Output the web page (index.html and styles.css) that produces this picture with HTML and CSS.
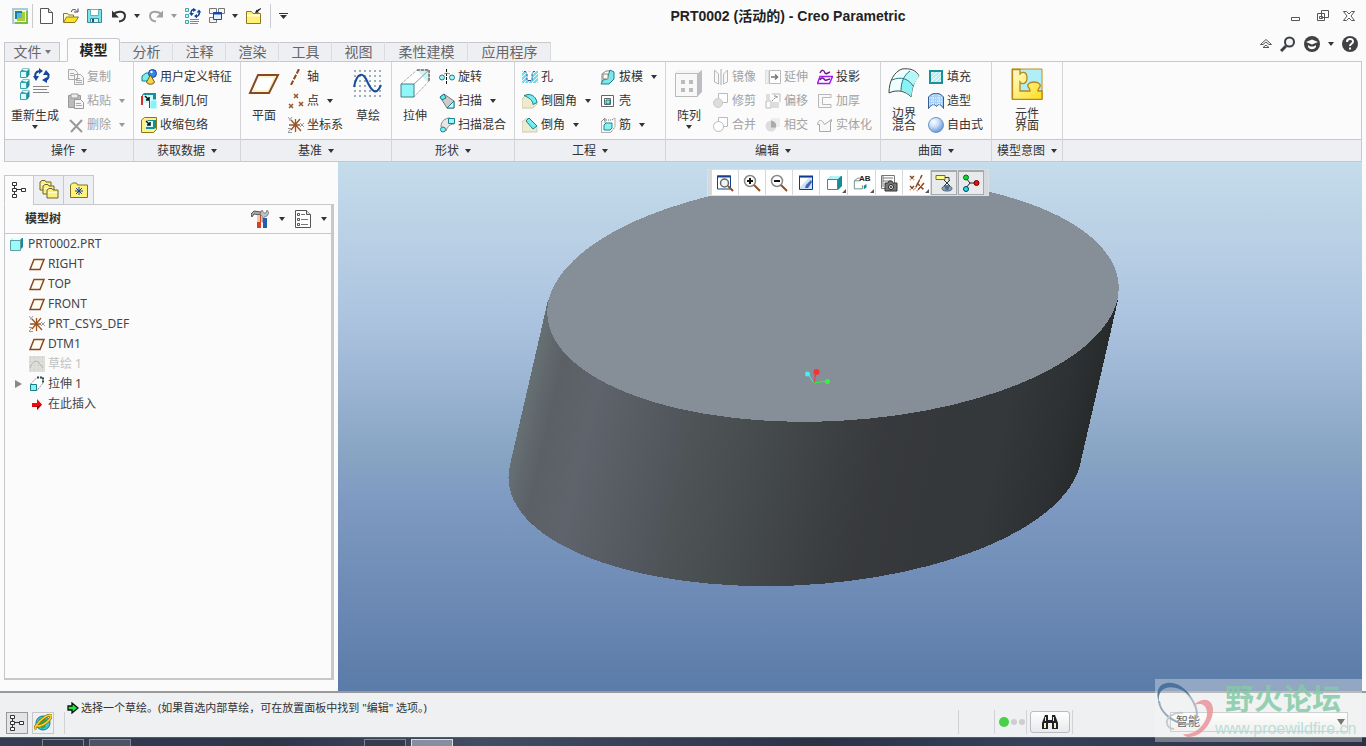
FILE: index.html
```html
<!DOCTYPE html>
<html lang="zh-CN">
<head>
<meta charset="utf-8">
<title>PRT0002 (活动的) - Creo Parametric</title>
<link rel="stylesheet" href="styles.css">
</head>
<body>
<svg class="sprite" aria-hidden="true">
  <defs>
    <linearGradient id="gold" x1="0" y1="0" x2="1" y2="1"><stop offset="0" stop-color="#fffbd0"/><stop offset="1" stop-color="#ffdf1e"/></linearGradient>
    <radialGradient id="ball" cx=".35" cy=".3" r=".75"><stop offset="0" stop-color="#fff"/><stop offset=".45" stop-color="#c5dcf8"/><stop offset="1" stop-color="#5f92d6"/></radialGradient>
    <pattern id="dots" width="4" height="4" patternUnits="userSpaceOnUse"><rect x="1" y="1" width="1" height="1" fill="#8fa6bd"/></pattern>
    <pattern id="hatch" width="4" height="4" patternUnits="userSpaceOnUse"><path d="M0 4L4 0" stroke="#fff"/></pattern>
  </defs>
  <symbol id="app" viewBox="0 0 16 16"><path fill="#a9cbe0" d="M0 0h16v16H0z"/><path fill="#7dbb4a" d="M3 14h11V3h2v13H3z"/><path fill="#eef6d8" d="M2 2h12v12H2z"/><path fill="#1b7fa8" d="M3 3h7v2H5v6H3z"/><path fill="#52b8dc" d="M5 5h5v5H5z"/><path fill="#a8cf3a" d="M10 4h3v9H5v-3h5z"/></symbol>
  <symbol id="new" viewBox="0 0 16 16"><path d="M1.500.5h8l4 4v11h-12z" fill="#fff" stroke="#555"/><path d="M9.500.5v4h4" fill="#ddd" stroke="#555"/></symbol>
  <symbol id="open" viewBox="0 0 16 16"><path d="M.5 14V5.500h4l1 1.500h5v2" fill="#fffbd0" stroke="#8b7a20"/><path d="M.5 14.500l3-5.500h12l-3.500 5.500z" fill="#ffe21f" stroke="#8b7a20"/><path d="M8.500 4c0-3 3-3 5-1.500M15 .5v3.500h-4" fill="none" stroke="#444"/></symbol>
  <symbol id="save" viewBox="0 0 16 16"><path d="M.5 1.500h14v13h-14z" fill="#7fe3ea" stroke="#2b8f9a"/><path d="M3.500 1.500h8v6h-8z" fill="#fff" stroke="#5fb6bf"/><path d="M3.500 10.500h8v4h-8z" fill="#e9eef2" stroke="#3f8c96"/><path d="M5 11h2v3H5z" fill="#2b4f78"/></symbol>
  <symbol id="undo" viewBox="0 0 16 16"><path d="M2 6.500C6 2.500 14 2.500 14 8c0 3-2.500 5-6 5.500" fill="none" stroke="currentColor" stroke-width="2"/><path d="M1 2.500v7h7z" fill="currentColor"/></symbol>
  <symbol id="regen" viewBox="0 0 16 16"><path d="M.5.5h3v3h-3zM.5 6.500h3v3h-3zM.5 12.500h3v3h-3z" fill="#c6fbfc" stroke="#3fa4ad"/><path d="M5 11.500h9M5 13.500h9M5 15.500h8" stroke="#888"/><path d="M6.500 6C5 3 7.500 1 9.500 1.500M14 3.500c1 3-1 5-3 5" fill="none" stroke="#13449c" stroke-width="1.500"/><path d="M8 0l3.500 2L8 4zM12 6v4.500L9 8zM4 5h5L6.500 8zM11.500 4.500h5L14 1.500z" fill="#13449c"/></symbol>
  <symbol id="windows" viewBox="0 0 16 16"><path d="M.5.5h7v5h-7zM9.500.5h6v5h-6zM.5 9.500h7v5h-7z" fill="#f5f5f5" stroke="#777"/><path d="M4.500 4.500h8v7h-8z" fill="#e3f2ff" stroke="#1a47a5"/><path d="M4 5.500h9" stroke="#1a47a5" stroke-width="2"/></symbol>
  <symbol id="close-folder" viewBox="0 0 16 16"><path d="M.5 15.500v-12h5l1.500 2h7.500v10z" fill="#fff176" stroke="#8b7a20"/><path d="M1 7.500h13" stroke="#fffce0" stroke-width="2"/><path d="M15 0c-1 1-3 1-4 2.500l-.5-1L9 5l4-.5-1-1L15 1z" fill="#222"/></symbol>
  <symbol id="regen-big" viewBox="0 0 32 32"><g id="cube-col"><path d="M1.500 3.500l2-3h7v6l-2 3z" fill="#218f98"/><path d="M3 2l1-1h6L8 3z" fill="#dff"/><path d="M1.500 3.500h6v6h-6z" fill="#d6ffff" stroke="#3aa3ac"/></g><use href="#cube-col" y="11"/><use href="#cube-col" y="22"/><path d="M14 18.500h16M14 21.500h14M14 24.500h16" stroke="#888"/><path d="M17 10c-2-4 0-7 5-7M28 5c3 3 1 7-2 7.500" fill="none" stroke="#16469f" stroke-width="2"/><path d="M20 0l4 3-4 3zM14 8h6l-3 5zM28 9v6l-5-3zM24 7h7l-4-5z" fill="#16469f"/></symbol>
  <symbol id="copy" viewBox="0 0 16 16"><path d="M.5.5h6l3 3v7h-9zM6.500 5.500h6l3 3v7h-9z" fill="#f4f4f4" stroke="#aaa"/><path d="M2 4.500h4M2 6.500h4M8 9.500h4M8 11.500h6M8 13.500h6" stroke="#aaa"/></symbol>
  <symbol id="paste" viewBox="0 0 16 16"><path d="M.5 2.500h12v12H.5z" fill="#bbb" stroke="#999"/><path d="M3 1h7v4H3z" fill="#eee" stroke="#999"/><path d="M6.500 6.500h6l3 3v6h-9z" fill="#f5f5f5" stroke="#999"/><path d="M8 10.500h5M8 12.500h6" stroke="#aaa"/></symbol>
  <symbol id="delete" viewBox="0 0 16 16"><path d="M2 3l12 12M14 3L3 15" stroke="#999" stroke-width="2"/></symbol>
  <symbol id="udf" viewBox="0 0 16 16"><path d="M1 7l4-3h5v5l-4 3H1z" fill="#7cecef" stroke="#15828d"/><circle cx="11.500" cy="4.500" r="4" fill="#3186ea" stroke="#1b4a96"/><circle cx="10.500" cy="3" r="1.200" fill="#fff"/><path d="M9.500 6l-4 7c1 3 7 3 8 0z" fill="#f3d449" stroke="#6d5c14"/></symbol>
  <symbol id="copygeom" viewBox="0 0 16 16"><path d="M1 2l2-2h12v10H1z" fill="#198d98"/><path d="M2 2h10v8H2z" fill="#c4fbfd"/><path d="M0 3h2v9H0z" fill="#d72b2b"/><path d="M4 3l4 4M8 4v3H5" stroke="#111" fill="none" stroke-width="1.500"/><path d="M9 7h7v9H9z" fill="#87f3f8" stroke="#f2ffff"/><path d="M8.500 7v8" stroke="#444"/></symbol>
  <symbol id="shrink" viewBox="0 0 16 16"><path d="M.5 3l3-2.500h12v12l-3 3H.5z" fill="#fff08a" stroke="#8a7816"/><path d="M5 5l2-2h8v8l-2 1H5z" fill="#168e95"/><path d="M4 4h8v6H4z" fill="#d4ffff"/><path d="M5 4l4 4M9 5v3H6" stroke="#111" fill="none" stroke-width="1.500"/></symbol>
  <symbol id="plane-big" viewBox="0 0 32 32"><path d="M10 7h20L21 25H2z" fill="#fff" stroke="#8a4820" stroke-width="2"/><path d="M11 9h16L20 23H5" fill="none" stroke="#f2e8a0"/></symbol>
  <symbol id="plane" viewBox="0 0 16 16"><path d="M5 3.500h10L11 13.500H1z" fill="#fffef5" stroke="#8a4820" stroke-width="1.500"/></symbol>
  <symbol id="axis" viewBox="0 0 16 16"><path d="M11 0L3 16" stroke="#8a4820" stroke-width="2" stroke-dasharray="5 1.500"/></symbol>
  <symbol id="points" viewBox="0 0 16 16"><path id="pt" d="M6 1l4 4M10 1L6 5" stroke="#9a5523" stroke-width="1.500"/><use href="#pt" x="-5" y="10"/><use href="#pt" x="5" y="8"/></symbol>
  <symbol id="csys" viewBox="0 0 16 16"><path d="M7.500 2v13M1 8h11M3 3l10 11M12 2L3 13" stroke="#9a5523" stroke-width="1.300"/><path d="M0 0l2 2.500L4 0M2 2v2M0 11.500h3l-3 4h4M12 6l4 4M16 6l-4 4" fill="none" stroke="#999"/></symbol>
  <symbol id="sketch-big" viewBox="0 0 32 32"><g fill="none" stroke="#9db0bd" stroke-width="2" stroke-dasharray="2 3"><path d="M2 3h29M2 8h29M2 13h29M2 18h29M2 23h29M2 28h29"/></g><path d="M2 19C5 4 11 4 15 13s9 16 14 4" fill="none" stroke="#174d9c" stroke-width="2"/></symbol>
  <symbol id="extrude-big" viewBox="0 0 32 32"><path d="M2 16L18 2h12v11L15 29z" fill="#fff" stroke="#aaa" stroke-dasharray="3 1"/><path d="M19 3h10v12z" fill="#c9f6f8"/><path d="M18 2h12v12" fill="none" stroke="#333" stroke-dasharray="3 1"/><path d="M2 16h13v13H2z" fill="#8ff7fa" stroke="#487f84"/><path d="M15 16L30 2" stroke="#999"/></symbol>
  <symbol id="extrude" viewBox="0 0 16 16"><path d="M1.500 8L8 1.500h6V7L8 14.500z" fill="#fff" stroke="#888" stroke-dasharray="2 1"/><path d="M8 1.500h6V7" fill="none" stroke="#224a50" stroke-width="2" stroke-dasharray="2 1"/><path d="M1.500 8.500h6v6h-6z" fill="#85f4f6" stroke="#187d88"/></symbol>
  <symbol id="revolve" viewBox="0 0 16 16"><circle cx="3" cy="8.500" r="2.500" fill="#a8f5f7" stroke="#247c84"/><circle cx="13" cy="8.500" r="2.500" fill="#a8f5f7" stroke="#247c84"/><path d="M7.500 0v16" stroke="#111" stroke-dasharray="3 1"/><path d="M5 5c2-1 4-1 6 0" fill="none" stroke="#777"/></symbol>
  <symbol id="sweep" viewBox="0 0 16 16"><path d="M1 4l4-3 10 7v7H8z" fill="#ccc" stroke="#777"/><path d="M1 4l4-3 2 4-4 2z" fill="#69e7eb" stroke="#157d89"/><path d="M8 15l7-7v7z" fill="#d3f9fa" stroke="#157d89"/></symbol>
  <symbol id="blend" viewBox="0 0 16 16"><path d="M2 10c0-6 4-9 9-9l4 6c-5 0-7 4-8 7z" fill="#e6e6e6" stroke="#888"/><path d="M9.500 1.500h6v5h-6z" fill="#9ff6f8" stroke="#168792"/><circle cx="4" cy="12.500" r="2.500" fill="#83eef1" stroke="#168792"/></symbol>
  <symbol id="hole" viewBox="0 0 16 16"><path d="M0 2h16v12H0z" fill="#64e3ec"/><path d="M0 2h16v12H0z" fill="url(#hatch)"/><path d="M3 2.500l2 3v6h5v-6l2-3z" fill="#fff"/><path d="M2 2.500h1.500L5 5v6.500h5V5l1.500-2.500H13" fill="none" stroke="#264aa0" stroke-dasharray="3 1"/></symbol>
  <symbol id="round" viewBox="0 0 16 16"><path d="M0 6l4-4c7-1 11 3 11 9l-4 4H0z" fill="#eee9cf" stroke="#cfc9ac"/><path d="M2 2.500l4-1c5 0 8 3 9 8l-4 2C11 8 8 5 2 2.500z" fill="#74ecf1" stroke="#16838c"/></symbol>
  <symbol id="chamfer" viewBox="0 0 16 16"><path d="M0 5l5-4 10 9v5H0z" fill="#eee9cf" stroke="#cfc9ac"/><path d="M4 4l3-3 8 8-4 3z" fill="#74ecf1" stroke="#16838c"/></symbol>
  <symbol id="draft" viewBox="0 0 16 16"><path d="M2 5l4-3h5v7l-4 4H2z" fill="#fff" stroke="#888"/><path d="M7 10l3-9 4 2v7l-5 5H1l2-4z" fill="#7ee6ea" stroke="#16838c"/><path d="M3 5h5v5H3z" fill="#fafaf0" stroke="#888"/></symbol>
  <symbol id="shell" viewBox="0 0 16 16"><path d="M1.500 2.500h12v11h-12zM4.500 5.500h6v6h-6z" fill="#fff" stroke="#666"/><path d="M6 7h4v4H6z" fill="#79e9ee" stroke="#28757a"/></symbol>
  <symbol id="rib" viewBox="0 0 16 16"><path d="M1.500 5.500v10h9M4 3h8l3-2v9l-4 5" fill="none" stroke="#666" stroke-dasharray="1 1"/><path d="M4 8l2-2h6v5l-2 2H4z" fill="#8af2f5" stroke="#168792"/><path d="M1 5l4-4v5" fill="none" stroke="#888"/></symbol>
  <symbol id="pattern-big" viewBox="0 0 32 32"><path d="M2 6l4-4h23v22l-5 5H2z" fill="#bcbec2"/><path d="M2 6l4-4h23l-5 4z" fill="#f5f5f5"/><path d="M2.500 5.500h22v23h-22z" fill="#f8f8f8" stroke="#bbb"/><path d="M8 12h4v4H8zM16 12h4v4h-4zM8 20h4v4H8zM16 20h4v4h-4z" fill="#bbb"/></symbol>
  <symbol id="mirror" viewBox="0 0 16 16"><path d="M1.500 1v12l4 2V5zM14.500 1v12l-4 2V5z" fill="#f8f8f8" stroke="#b8b8b8"/><path d="M8 0v16" stroke="#aaa"/></symbol>
  <symbol id="trim" viewBox="0 0 16 16"><path d="M5.500.5h9v9h-9z" fill="#fff" stroke="#bbb"/><circle cx="5" cy="10" r="4.500" fill="#ddd" stroke="#ccc"/></symbol>
  <symbol id="merge" viewBox="0 0 16 16"><path d="M5.500.5h9v9h-9z" fill="#fff" stroke="#bbb"/><circle cx="5.500" cy="9.500" r="5" fill="#fff" stroke="#bbb"/></symbol>
  <symbol id="extend" viewBox="0 0 16 16"><path d="M.5 1.500h3v13h-3z" fill="#eee" stroke="#ddd"/><path d="M4.500 1.500h11v13h-11z" fill="#fff" stroke="#bbb"/><path d="M6 8h6M10 5.500L12.500 8 10 10.500" fill="none" stroke="#777" stroke-width="1.500"/></symbol>
  <symbol id="offset" viewBox="0 0 16 16"><path d="M1 1h4v6H1zM7 9h7v6H7z" fill="#ddd"/><path d="M1 8h5v7H1zM7 1h8v8" fill="none" stroke="#bbb"/><path d="M7 8l5-5M9 3h3v3" stroke="#888" fill="none" stroke-dasharray="2 1"/></symbol>
  <symbol id="intersect" viewBox="0 0 16 16"><path d="M6 1h9v9H6z" fill="#eee"/><circle cx="6" cy="9" r="5.500" fill="#ddd"/><path d="M6 3.500a5.500 5.500 0 0 1 5 7H6z" fill="#aaa"/></symbol>
  <symbol id="project" viewBox="0 0 16 16"><path d="M3 7.500h12.500l-3 7H.5z" fill="#fff" stroke="#a11bee" stroke-width="1.500"/><path d="M3 4c2-4 4-3 5 0 2 2 4-1 5-1M3 11c2-4 4-1 5 0 2 1 3-1 5-1" fill="none" stroke="#6d1591" stroke-width="1.500"/></symbol>
  <symbol id="thicken" viewBox="0 0 16 16"><path d="M14 1.500H1.500v13H14v-3H5.500v-7H14z" fill="#f8f8f8" stroke="#b8b8b8"/></symbol>
  <symbol id="solidify" viewBox="0 0 16 16"><path d="M2.500 14.500v-7h-2c1-6 5-5 7 0l7-5v2h-1v10z" fill="#f8f8f8" stroke="#aaa"/></symbol>
  <symbol id="boundary-big" viewBox="0 0 32 32"><path d="M1 25C1 13 6 4 14 1c8-1 14 1 17 7-5 5-7 12-8 21-5-6-14-8-22-4z" fill="#effeff" stroke="#444"/><path d="M16 10c4 1 7 4 9 8l-2 11c-3-4-6-6-10-7 0-5 1-9 3-12z" fill="#8af2f5"/><path d="M22 3c4 1 7 2 9 5l-6 10c-2-4-5-7-9-8 1-3 3-5 6-7z" fill="#b5f7f9"/><path d="M4 12c9-4 17-1 21 6M22 3c-6 4-9 11-9 20" fill="none" stroke="#28747a"/></symbol>
  <symbol id="fill" viewBox="0 0 16 16"><path d="M2 2h12v12H2z" fill="#a9f3f5" stroke="#16939b" stroke-width="2"/><path d="M3 3h10v10H3z" fill="url(#hatch)"/></symbol>
  <symbol id="style" viewBox="0 0 16 16"><path d="M.5 15.500V4c4-5 11-5 15 0v11.500c-2-4-5-5-7-2-2-3-5-2-8 2z" fill="#a9cef5" stroke="#345b91"/><path d="M1 5h14M1 8h14M1 11h14M5 2v11M11 2v11" stroke="#f5fbff" stroke-dasharray="1 1"/></symbol>
  <symbol id="freeform" viewBox="0 0 16 16"><circle cx="8" cy="8" r="7.500" fill="url(#ball)" stroke="#7396c5"/></symbol>
  <symbol id="component-big" viewBox="0 0 32 32"><path d="M1 1h30v30H1z" fill="#b0eff5" stroke="#c08e20"/><path d="M1.500 1.500H9V6c3-3 7-2 7 4s-5 7-7 4v9h10c0-2 0-2-1-3-3-3 0-6 5-6s8 3 5 6c-1 1-1 1-1 3h4v8.500H1.500z" fill="url(#gold)" stroke="#b78717" stroke-width="1.300"/></symbol>
  <symbol id="tree" viewBox="0 0 16 16"><path d="M3.500 4v8M6 7.500h5" stroke="#333"/><path d="M1.500.5h4v3h-4zM1.500 6.500h4v3h-4zM1.500 12.500h4v3h-4zM10.500 6.500h4v3h-4z" fill="#fff" stroke="#333"/></symbol>
  <symbol id="folders" viewBox="0 0 20 20"><g id="fold"><path d="M1 10V2l2-1.500h3l1 1.500h5v8z" fill="#fff07a" stroke="#6b6428"/><path d="M2 4.500h9" stroke="#fffbd4"/></g><use href="#fold" x="3" y="4"/><use href="#fold" x="7" y="8"/></symbol>
  <symbol id="favorites" viewBox="0 0 18 16"><path d="M.5 15.500V3l2-2h4l1 2h10v12.500z" fill="#fff27d" stroke="#7d732a"/><path d="M9 5v8M5 9h8M6 6l6 6M12 6l-6 6" stroke="#153f99"/></symbol>
  <symbol id="tools" viewBox="0 0 18 20"><path d="M0 5l3-3 7 1v3L3 5 1 8z" fill="#aaa" stroke="#555"/><path d="M6 6h4v13H6z" fill="#db4027"/><path d="M6 6h3v7H6z" fill="#eecb9a"/><path d="M11 1l2 3h2l1-3 2 3-2 3-3 1v5h-2V7l-2-2z" fill="#b9c4ca" stroke="#666" stroke-width=".7"/><path d="M12 9h4v10h-4z" fill="#245db5"/></symbol>
  <symbol id="settings" viewBox="0 0 16 18"><path d="M.5.5h11l4 4v13H.5z" fill="#fff" stroke="#555"/><path d="M11.500.5v4h4" fill="#ddd" stroke="#555"/><path d="M6 4.500h4M6 9.500h7M6 14.500h7" stroke="#777"/><path d="M2.500 3.500h2v2h-2zM2.500 8.500h2v2h-2zM2.500 13.500h2v2h-2z" fill="#fff" stroke="#555"/></symbol>
  <symbol id="part" viewBox="0 0 16 16"><path d="M1 5l3-3h10v9l-3 3z" fill="#168a95"/><path d="M2 4l2-2h9l-2 2z" fill="#e9ffff"/><path d="M1.500 4.500h10v10h-10z" fill="#9dfafa" stroke="#5f9ea4"/></symbol>
  <symbol id="style-cube" viewBox="0 0 18 18"><path d="M2 6l4-4h11v10l-4 4z" fill="#168a95"/><path d="M3 5l3-3h10l-3 3z" fill="#b5f5f7"/><path d="M2.500 5.500h10v10h-10z" fill="#fff" stroke="#777"/></symbol>
  <symbol id="sketch-off" viewBox="0 0 16 16"><path d="M0 0h16v16H0z" fill="#dddeda"/><path d="M0 0h16v16H0z" fill="url(#dots)" opacity=".4"/><path d="M1 12C4 4 8 4 10 7l4 5" fill="none" stroke="#b5b49b"/></symbol>
  <symbol id="insert" viewBox="0 0 16 16"><path d="M3 7h5V3l5 5.500L8 14v-3H3z" fill="#f00c0c"/><path d="M3 10h5v4l5-5.500-5 2H3z" fill="#9a0707"/></symbol>
  <symbol id="refit" viewBox="0 0 18 18"><path d="M1.500 2h13v13h-13z" fill="#fff" stroke="#17418f"/><path d="M1 2.500h14" stroke="#17418f" stroke-width="2"/><circle cx="8.500" cy="9" r="4" fill="#f0f3f6" stroke="#666" stroke-width="1.500"/><path d="M12 12l5 5" stroke="#914d25" stroke-width="2"/></symbol>
  <symbol id="lens" viewBox="0 0 18 18"><circle cx="7" cy="7" r="5.500" fill="#fff" stroke="#888" stroke-width="1.500"/><path d="M11 11l6 6" stroke="#914d25" stroke-width="2"/><path d="M4 7h6" stroke="#111" stroke-width="2"/></symbol>
  <symbol id="repaint" viewBox="0 0 18 18"><path d="M2.500 2.500h13v13h-13z" fill="#cfe1f6" stroke="#103a91"/><path d="M2 2.500h14" stroke="#103a91" stroke-width="2"/><path d="M3 4h9L3 13z" fill="#fff"/><path d="M14 6l-5 5-1 3h3l4-6z" fill="#3867ba"/></symbol>
  <symbol id="saved" viewBox="0 0 20 18"><path d="M1.500 15.500v-9l4-3h2M1.500 6.500h6M1.500 15.500h9v-4" fill="none" stroke="#688"/><path d="M12 12l3-2v4l-3 2z" fill="#168994"/></symbol>
  <symbol id="camera" viewBox="0 0 18 18"><path d="M1.500 1.500h13v13h-13z" fill="#fff" stroke="#777"/><path d="M3 4h10M3 7h8M3 2v11" stroke="#777"/><path d="M5 9h3l1-2h3l1 2h4v8H5z" fill="#777" stroke="#333"/><circle cx="11" cy="13" r="2.500" fill="#eee" stroke="#222"/><circle cx="11" cy="13" r="1" fill="#222"/></symbol>
  <symbol id="datums" viewBox="0 0 18 18"><path d="M2 2l4 4M6 2L2 6M14 1L7 15M9 9l7 7M16 9l-7 8M2 12l4 4M6 12l-4 4" stroke="#8a4820" stroke-width="1.500" stroke-dasharray="4 1"/></symbol>
  <symbol id="annot" viewBox="0 0 18 18"><path d="M1 1.500h9v4H1z" fill="#ffff82" stroke="#746c26"/><path d="M10 3.500h4v3M9 6l3 3 3-3M12 9l-3 3h6z" fill="none" stroke="#333"/><ellipse cx="12" cy="14.500" rx="5" ry="2.500" fill="#8aa0b4" stroke="#526170"/><circle cx="12" cy="14" r="2" fill="#3f7097"/></symbol>
  <symbol id="spin" viewBox="0 0 18 18"><path d="M4 4l4 5-4 5M8 9h6" fill="none" stroke="#222"/><circle cx="4" cy="3.500" r="2.500" fill="#15d521" stroke="#064"/><circle cx="14.500" cy="9" r="2.500" fill="#eb1111" stroke="#600"/><circle cx="4" cy="15" r="2.500" fill="#24dfe5" stroke="#045"/></symbol>
  <symbol id="browser" viewBox="0 0 18 18"><circle cx="9" cy="9" r="7" fill="#3ac8df" stroke="#14788f"/><path d="M5 5l5-2 4 4-4 2 2 4-5 2-1-5z" fill="#26ac49"/><path d="M1 16C0 12 10 1 17 1c1 4-8 12-15 11" fill="none" stroke="#8a6b0e" stroke-width="3"/><path d="M1 16C0 12 10 1 17 1c1 4-8 12-15 11" fill="none" stroke="#ffd527" stroke-width="1.500"/></symbol>
  <symbol id="go" viewBox="0 0 12 12"><path d="M1 4h4V1l6 5-6 5V8H1z" fill="#16ea42" stroke="#111" stroke-width="1.300"/></symbol>
  <symbol id="binoculars" viewBox="0 0 18 16"><path d="M4 1h3v5h4V1h3l3 8v6h-6V9H7v6H1V9z" fill="#222"/><path d="M4 3h1v4H4zM3 9h2v5H3zM13 9h2v5h-2zM12 3h1v4h-1z" fill="#f3eed2"/></symbol>
  <symbol id="search" viewBox="0 0 16 16"><circle cx="9.500" cy="6" r="4.500" fill="#eef5fb" stroke="#3e3e40" stroke-width="2"/><path d="M6 10l-5 5" stroke="#3e3e40" stroke-width="3"/></symbol>
  <symbol id="learn" viewBox="0 0 16 16"><circle cx="8" cy="8" r="8" fill="#414143"/><path d="M2 6l6-2.500L14 6 8 8.500zM4 9c2 2 6 2 8 0v2c-2 3-6 3-8 0z" fill="#fff"/></symbol>
  <symbol id="help" viewBox="0 0 16 16"><circle cx="8" cy="8" r="8" fill="#414143"/><path d="M5 6c0-4 6-4 6-.5C11 8 8 7.500 8 10M8 11.500v2" fill="none" stroke="#fff" stroke-width="2"/></symbol>
</svg>

<header class="titlebar">
  <div class="quick">
    <span class="app-icon"><svg class="i16"><use href="#app"/></svg></span>
    <button aria-label="新建"><svg class="i16"><use href="#new"/></svg></button>
    <button aria-label="打开"><svg class="i16"><use href="#open"/></svg></button>
    <button aria-label="保存"><svg class="i16"><use href="#save"/></svg></button>
    <button class="drop" aria-label="撤消"><svg class="i16"><use href="#undo"/></svg><span class="arrow"></span></button>
    <button class="drop off" aria-label="重做"><svg class="i16 flip"><use href="#undo"/></svg><span class="arrow"></span></button>
    <button aria-label="重新生成"><svg class="i16"><use href="#regen"/></svg></button>
    <button class="drop" aria-label="窗口"><svg class="i16"><use href="#windows"/></svg><span class="arrow"></span></button>
    <button aria-label="关闭"><svg class="i16"><use href="#close-folder"/></svg></button>
    <button class="customize" aria-label="自定义"><svg width="9" height="7" viewBox="0 0 9 7"><path d="M0 0h9v1H0zM1 2h7L4.500 6z" fill="#333"/></svg></button>
  </div>
  <h1 class="title">PRT0002 (活动的) - Creo Parametric</h1>
  <div class="window-controls">
    <button aria-label="最小化"><svg width="12" height="12" viewBox="0 0 12 12"><path d="M1.500 7.500h8v3h-8z" fill="#fff" stroke="#555"/></svg></button>
    <button aria-label="还原"><svg width="12" height="12" viewBox="0 0 12 12"><path d="M4.500.5h7v7h-7zM.5 3.500h7v7h-7zM2.500 6.500h3v2h-3z" fill="#fff" stroke="#555"/></svg></button>
    <button aria-label="关闭窗口"><svg width="12" height="12" viewBox="0 0 12 12"><path d="M.5 1.500h3L6 4l2.500-2.500h3L8 6l3.500 4.500h-3L6 8l-2.500 2.500h-3L4 6z" fill="#fff" stroke="#555"/></svg></button>
  </div>
</header>

<nav class="tabs">
  <button class="tab file">文件<span class="arrow"></span></button>
  <button class="tab active">模型</button>
  <button class="tab">分析</button><button class="tab">注释</button><button class="tab">渲染</button><button class="tab">工具</button><button class="tab">视图</button><button class="tab wide">柔性建模</button><button class="tab wide">应用程序</button>
  <div class="tab-tools">
    <button aria-label="折叠"><svg width="12" height="10" viewBox="0 0 12 10"><path d="M.5 5.500l5.500-5 5.500 5H9L6 3 3 5.500zM3 8.500L6 6l3 2.500z" fill="#fff" stroke="#555"/></svg></button>
    <button aria-label="搜索"><svg class="i16"><use href="#search"/></svg></button>
    <button class="drop" aria-label="学习"><svg class="i16"><use href="#learn"/></svg><span class="arrow"></span></button>
    <button aria-label="帮助"><svg class="i16"><use href="#help"/></svg></button>
  </div>
</nav>

<div class="ribbon">
  <section class="group g-ops">
    <div class="tools">
      <button class="big"><svg class="i32"><use href="#regen-big"/></svg><span>重新生成</span><span class="arrow"></span></button>
      <div class="stack off">
        <button class="cmd"><svg class="i16"><use href="#copy"/></svg>复制</button>
        <button class="cmd"><svg class="i16"><use href="#paste"/></svg>粘贴<span class="arrow"></span></button>
        <button class="cmd"><svg class="i16"><use href="#delete"/></svg>删除<span class="arrow"></span></button>
      </div>
    </div>
    <button class="caption">操作<span class="arrow"></span></button>
  </section>
  <section class="group g-data">
    <div class="tools">
      <div class="stack">
        <button class="cmd"><svg class="i16"><use href="#udf"/></svg>用户定义特征</button>
        <button class="cmd"><svg class="i16"><use href="#copygeom"/></svg>复制几何</button>
        <button class="cmd"><svg class="i16"><use href="#shrink"/></svg>收缩包络</button>
      </div>
    </div>
    <button class="caption">获取数据<span class="arrow"></span></button>
  </section>
  <section class="group g-datum">
    <div class="tools">
      <button class="big"><svg class="i32"><use href="#plane-big"/></svg><span>平面</span></button>
      <div class="stack">
        <button class="cmd"><svg class="i16"><use href="#axis"/></svg>轴</button>
        <button class="cmd"><svg class="i16"><use href="#points"/></svg>点<span class="arrow"></span></button>
        <button class="cmd"><svg class="i16"><use href="#csys"/></svg>坐标系</button>
      </div>
      <button class="big"><svg class="i32"><use href="#sketch-big"/></svg><span>草绘</span></button>
    </div>
    <button class="caption">基准<span class="arrow"></span></button>
  </section>
  <section class="group g-shape">
    <div class="tools">
      <button class="big"><svg class="i32"><use href="#extrude-big"/></svg><span>拉伸</span></button>
      <div class="stack">
        <button class="cmd"><svg class="i16"><use href="#revolve"/></svg>旋转</button>
        <button class="cmd"><svg class="i16"><use href="#sweep"/></svg>扫描<span class="arrow"></span></button>
        <button class="cmd"><svg class="i16"><use href="#blend"/></svg>扫描混合</button>
      </div>
    </div>
    <button class="caption">形状<span class="arrow"></span></button>
  </section>
  <section class="group g-eng">
    <div class="tools">
      <div class="stack">
        <button class="cmd"><svg class="i16"><use href="#hole"/></svg>孔</button>
        <button class="cmd"><svg class="i16"><use href="#round"/></svg>倒圆角<span class="arrow"></span></button>
        <button class="cmd"><svg class="i16"><use href="#chamfer"/></svg>倒角<span class="arrow"></span></button>
      </div>
      <div class="stack">
        <button class="cmd"><svg class="i16"><use href="#draft"/></svg>拔模<span class="arrow"></span></button>
        <button class="cmd"><svg class="i16"><use href="#shell"/></svg>壳</button>
        <button class="cmd"><svg class="i16"><use href="#rib"/></svg>筋<span class="arrow"></span></button>
      </div>
    </div>
    <button class="caption">工程<span class="arrow"></span></button>
  </section>
  <section class="group g-edit">
    <div class="tools">
      <button class="big"><svg class="i32"><use href="#pattern-big"/></svg><span>阵列</span><span class="arrow"></span></button>
      <div class="stack off">
        <button class="cmd"><svg class="i16"><use href="#mirror"/></svg>镜像</button>
        <button class="cmd"><svg class="i16"><use href="#trim"/></svg>修剪</button>
        <button class="cmd"><svg class="i16"><use href="#merge"/></svg>合并</button>
      </div>
      <div class="stack off">
        <button class="cmd"><svg class="i16"><use href="#extend"/></svg>延伸</button>
        <button class="cmd"><svg class="i16"><use href="#offset"/></svg>偏移</button>
        <button class="cmd"><svg class="i16"><use href="#intersect"/></svg>相交</button>
      </div>
      <div class="stack">
        <button class="cmd"><svg class="i16"><use href="#project"/></svg>投影</button>
        <button class="cmd off"><svg class="i16"><use href="#thicken"/></svg>加厚</button>
        <button class="cmd off"><svg class="i16"><use href="#solidify"/></svg>实体化</button>
      </div>
    </div>
    <button class="caption">编辑<span class="arrow"></span></button>
  </section>
  <section class="group g-surf">
    <div class="tools">
      <button class="big two"><svg class="i32"><use href="#boundary-big"/></svg><span>边界<br>混合</span></button>
      <div class="stack">
        <button class="cmd"><svg class="i16"><use href="#fill"/></svg>填充</button>
        <button class="cmd"><svg class="i16"><use href="#style"/></svg>造型</button>
        <button class="cmd"><svg class="i16"><use href="#freeform"/></svg>自由式</button>
      </div>
    </div>
    <button class="caption">曲面<span class="arrow"></span></button>
  </section>
  <section class="group g-intent">
    <div class="tools">
      <button class="big two"><svg class="i32"><use href="#component-big"/></svg><span>元件<br>界面</span></button>
    </div>
    <button class="caption">模型意图<span class="arrow"></span></button>
  </section>
  <div class="group rest"><div class="tools"></div><div class="caption"></div></div>
</div>

<main class="work">
  <aside class="side">
    <div class="side-tabs">
      <button class="active" aria-label="模型树"><svg width="16" height="18" viewBox="0 0 16 16"><use href="#tree"/></svg></button>
      <button aria-label="文件夹"><svg width="20" height="20"><use href="#folders"/></svg></button>
      <button aria-label="收藏夹"><svg width="18" height="16"><use href="#favorites"/></svg></button>
    </div>
    <div class="panel">
      <div class="panel-head">
        <h2>模型树</h2>
        <button aria-label="设置"><svg width="18" height="20"><use href="#tools"/></svg><span class="arrow"></span></button>
        <button aria-label="显示"><svg width="16" height="18"><use href="#settings"/></svg><span class="arrow"></span></button>
      </div>
      <ul class="tree">
        <li class="root"><svg class="i16"><use href="#part"/></svg>PRT0002.PRT</li>
        <li><svg class="i16"><use href="#plane"/></svg>RIGHT</li>
        <li><svg class="i16"><use href="#plane"/></svg>TOP</li>
        <li><svg class="i16"><use href="#plane"/></svg>FRONT</li>
        <li><svg class="i16"><use href="#csys"/></svg>PRT_CSYS_DEF</li>
        <li><svg class="i16"><use href="#plane"/></svg>DTM1</li>
        <li class="hidden-item"><svg class="i16"><use href="#sketch-off"/></svg>草绘 1</li>
        <li class="branch"><button class="expand" aria-label="展开"></button><svg class="i16"><use href="#extrude"/></svg>拉伸 1</li>
        <li><svg class="i16"><use href="#insert"/></svg>在此插入</li>
      </ul>
    </div>
  </aside>
  <div class="canvas">
    <svg class="scene" viewBox="338 162 1024 529" preserveAspectRatio="xMidYMin slice">
      <defs>
        <linearGradient id="wall" gradientUnits="userSpaceOnUse" x1="548" y1="300" x2="1088" y2="424">
          <stop offset="0" stop-color="#667073"/><stop offset=".05" stop-color="#5b6066"/><stop offset=".12" stop-color="#5f646c"/><stop offset=".28" stop-color="#51555c"/><stop offset=".3" stop-color="#4f5557"/><stop offset=".5" stop-color="#414548"/><stop offset=".65" stop-color="#37393c"/><stop offset=".85" stop-color="#34383a"/><stop offset=".96" stop-color="#2d3032"/><stop offset="1" stop-color="#282b2c"/>
        </linearGradient>
      </defs>
      <g shape-rendering="crispEdges">
        <path d="M548 300L510 465A286 120 -3 0 0 1080 465L1118 300z" fill="url(#wall)"/>
        <ellipse cx="833" cy="300" rx="286" ry="121" transform="rotate(-3 833 300)" fill="#868e97"/>
      </g>
      <path d="M814 383l-6-9" stroke="#3fe9ee"/><path d="M814 383l2-11" stroke="#f33"/><path d="M814 383l13-2" stroke="#2cf33a"/>
      <circle cx="807.500" cy="374" r="2.500" fill="#3ff0f5"/><circle cx="816.500" cy="372" r="3" fill="#f83238"/><circle cx="827.500" cy="381.500" r="2.500" fill="#34f63e"/>
    </svg>
    <div class="float-bar">
      <button aria-label="重新调整"><svg class="i18"><use href="#refit"/></svg></button>
      <button aria-label="放大"><svg class="i18"><use href="#lens"/><path d="M7 4v6" stroke="#111" stroke-width="2"/></svg></button>
      <button aria-label="缩小"><svg class="i18"><use href="#lens"/></svg></button>
      <button aria-label="重画"><svg class="i18"><use href="#repaint"/></svg></button>
      <button class="more" aria-label="显示样式"><svg class="i18"><use href="#style-cube"/></svg></button>
      <button class="more" aria-label="已保存方向"><svg class="i18"><use href="#saved"/><text x="6" y="7" class="ab">AB</text></svg></button>
      <button aria-label="视图管理器"><svg class="i18"><use href="#camera"/></svg></button>
      <button class="more" aria-label="基准显示"><svg class="i18"><use href="#datums"/></svg></button>
      <button class="pressed" aria-label="注释显示"><svg class="i18"><use href="#annot"/></svg></button>
      <button class="pressed" aria-label="旋转中心"><svg class="i18"><use href="#spin"/></svg></button>
    </div>
  </div>
</main>

<footer class="status">
  <div class="status-left">
    <button class="pressed" aria-label="导航器"><svg class="i16"><use href="#tree"/></svg></button>
    <button aria-label="浏览器"><svg class="i18"><use href="#browser"/></svg></button>
  </div>
  <p class="message"><svg width="12" height="12"><use href="#go"/></svg>选择一个草绘。(如果首选内部草绘，可在放置面板中找到 "编辑" 选项。)</p>
  <div class="status-right">
    <span class="cell blank"></span>
    <span class="cell lights"><i class="lamp on"></i><i class="lamp"></i><i class="lamp"></i></span>
    <span class="cell find"><button aria-label="查找"><svg width="18" height="16"><use href="#binoculars"/></svg></button></span>
    <span class="cell filter"><select aria-label="选择过滤器"><option>智能</option></select><span class="arrow"></span></span>
  </div>
  <div class="watermark">
    <svg class="rings" viewBox="0 0 60 62"><path d="M4 22C5 32 14 41 28 45" fill="none" stroke="#8fa3b8" stroke-width="2"/><path d="M30 12c9 9 14 20 11 28-2 4-7 6-13 5" fill="none" stroke="#a9b4c0" stroke-width="2"/><path d="M4 24C0 12 4 5 12 4c9-1 18 4 24 14C27 9 17 7 11 9 5 11 3 16 4 24z" fill="#4a729c"/><path d="M28 34c-9-1-17 4-16 10 0 4 4 6 7 6" fill="none" stroke="#c0c7cf" stroke-width="2"/><path d="M38 27c7-9 20-9 20 4 0 12-11 27-24 27-3 0-5-1-6-3 14 2 25-13 24-22-1-8-7-10-14-6z" fill="#ea9aa0"/></svg>
    <div class="mark-text"><strong>野火论坛</strong><span>www.proewildfire.cn</span></div>
  </div>
</footer>
<div class="taskbar"><i class="task first"></i><i class="task"></i><i class="task third"></i><i class="task bright"></i></div>
</body>
</html>
```
FILE: styles.css
```css
* { box-sizing: border-box; }
body {
  margin: 0;
  min-height: 100vh;
  display: flex;
  flex-direction: column;
  background: #fbfbfb;
  color: #333;
  font: 12px/16px "Noto Sans", "Noto Sans CJK SC", sans-serif;
  overflow: hidden;
}
button { border: 0; margin: 0; padding: 0; background: none; color: inherit; font: inherit; }
h1, h2, p, ul { margin: 0; padding: 0; }
svg { display: block; flex: none; }
.sprite { position: absolute; width: 0; height: 0; }
.i16 { width: 16px; height: 16px; }
.i18 { width: 18px; height: 18px; }
.i32 { width: 32px; height: 32px; }
.flip { transform: scaleX(-1); }
.arrow { flex: none; width: 0; height: 0; border: 3px solid transparent; border-top: 4px solid #333; border-bottom: 0; }
.off { color: #a2a2a2; }
.off .arrow { border-top-color: #999; }

.titlebar { display: flex; align-items: center; height: 32px; }
.quick { display: flex; align-items: center; gap: 8px; width: 290px; padding-left: 12px; }
.quick button { display: flex; align-items: center; gap: 7px; }
.app-icon { display: flex; align-items: center; height: 24px; padding-right: 4px; margin-right: -2px; border-right: 1px solid #c9cbd0; }
.quick .customize { height: 24px; padding-left: 8px; border-left: 1px solid #c9cbd0; }
.title { flex: 1; text-align: center; font: bold 14px/16px "Liberation Sans", "Noto Sans CJK SC", sans-serif; color: #222; }
.window-controls { display: flex; justify-content: space-between; width: 80px; padding: 0 11px 0 4px; }

.tabs { display: flex; align-items: flex-end; height: 30px; padding: 0 4px; margin-bottom: -1px; z-index: 1; }
.tab { height: 20px; width: 53px; padding: 0; border: 1px solid #c6c8cc; border-left-color: #eef0f2; border-right-color: #d9dbdf; background: #eeeff2; color: #66666a; font-size: 14px; line-height: 16px; text-align: center; white-space: nowrap; }
.tab.file { display: flex; align-items: center; justify-content: center; gap: 3px; width: 56px; margin-right: 7px; border-color: #c6c8cc; }
.tab.file .arrow { border-top-color: #777; }
.tab.active { height: 24px; line-height: 22px; border-color: #c6c8cc; border-bottom-color: #fbfbfb; border-radius: 3px 3px 0 0; background: #fbfbfb; color: #222; font-weight: bold; }
.tab.wide { width: 83px; }
.tab-tools { display: flex; align-items: center; gap: 8px; margin: 0 4px 10px auto; }
.tab-tools .drop { display: flex; align-items: center; gap: 8px; }

.ribbon { display: flex; height: 101px; margin: 0 4px; border: 1px solid #c6c8cc; }
.group { display: flex; flex-direction: column; border-right: 1px solid #d2d4d8; flex: none; }
.g-ops { width: 129px; }
.g-data { width: 107px; }
.g-datum { width: 151px; }
.g-shape { width: 123px; }
.g-eng { width: 151px; }
.g-edit { width: 215px; }
.g-surf { width: 111px; }
.g-intent { width: 71px; }
.rest { flex: 1; border-right: 0; }
.tools { display: flex; flex: 1; padding: 3px 3px 0; }
.caption { display: flex; align-items: center; justify-content: center; gap: 6px; width: 100%; height: 22px; border-top: 1px solid #c6c8cc; background: #eeeff2; white-space: nowrap; }
.big { display: flex; flex-direction: column; align-items: center; width: 54px; height: 74px; padding-top: 3px; line-height: 16px; white-space: nowrap; }
.big span:nth-child(2) { margin-top: 8px; }
.big .arrow { margin-top: 1px; }
.big.two { line-height: 12px; }
.g-datum .big, .g-shape .big, .g-edit .big, .g-surf .big { width: 40px; }
.g-intent .tools { justify-content: center; }
.stack { display: flex; flex-direction: column; }
.cmd { display: flex; align-items: center; gap: 3px; height: 24px; padding: 0 3px; white-space: nowrap; }
.cmd .arrow { margin-left: 5px; }
.g-ops .stack { padding-left: 3px; }
.g-data .tools { padding-left: 4px; }
.g-datum .stack { width: 64px; padding-left: 1px; }
.g-shape .stack { padding-left: 1px; }
.g-eng .tools { padding-left: 4px; }
.g-eng .stack { width: 78px; }
.g-eng .stack + .stack { padding-left: 3px; }
.g-edit .stack { width: 52px; padding-left: 1px; }
.g-surf .stack { padding-left: 1px; }

.work { display: flex; flex: 1; min-height: 0; padding-right: 4px; }
.side { display: flex; flex-direction: column; width: 338px; padding: 13px 4px 11px; flex: none; }
.side-tabs { display: flex; height: 30px; margin-bottom: -1px; z-index: 1; }
.side-tabs button { display: flex; align-items: center; justify-content: center; width: 31px; border: 1px solid #c6c8cc; background: #eeeff2; margin-right: -1px; }
.side-tabs .active { width: 30px; border-bottom-color: #fbfbfb; background: #fbfbfb; }
.panel { flex: 1; border: 1px solid #c6c8cc; border-right-width: 3px; border-bottom-width: 2px; }
.panel-head { display: flex; align-items: center; gap: 10px; height: 29px; padding: 0 4px 0 20px; border-bottom: 1px solid #c6c8cc; }
.panel-head h2 { flex: 1; font-size: 12px; }
.panel-head button { display: flex; align-items: center; gap: 10px; }
.tree { list-style: none; }
.tree li { display: flex; align-items: center; gap: 3px; height: 20px; padding-left: 24px; color: #44444a; }
.tree .root { padding-left: 4px; }
.tree .hidden-item { color: #c2c2c2; }
.tree .branch { padding-left: 10px; }
.expand { width: 0; height: 0; border: 4px solid transparent; border-left: 7px solid #888; border-right: 0; margin-right: 4px; }

.canvas { position: relative; flex: 1; overflow: hidden; background: linear-gradient(#c5dceb, #acc3df 30%, #88a5c4 55%, #7e9ac2 64%, #5b7ba8); }
.scene { width: 100%; height: 100%; }
.float-bar { position: absolute; top: 7px; left: 50%; transform: translateX(-50%); margin-left: -2px; display: flex; gap: 1px; padding: 0 4px; border: 1px solid #dcdfe3; background: #d5d8dc; }
.float-bar button { position: relative; display: flex; align-items: center; justify-content: center; width: 26px; height: 25px; background: #fff; }
.float-bar .pressed { border: 1px solid #a6a9ae; border-top-width: 2px; background: #e9eaec; }
.float-bar .more { width: 27px; }
.float-bar .more::after { content: ""; position: absolute; right: 1px; bottom: 2px; border: 2px solid #555; border-top-color: transparent; border-left-color: transparent; }
.ab { font: bold 8px "Liberation Sans", sans-serif; fill: #222; }

.status { position: relative; display: flex; height: 46px; padding: 0 12px 0 6px; border-top: 2px solid #999; background: #eef0f2; }
.status-left { display: flex; gap: 4px; align-self: flex-end; padding-right: 10px; margin-bottom: 3px; border-right: 1px solid #d0d2d6; }
.status-left button { display: flex; align-items: center; justify-content: center; width: 22px; height: 22px; border: 1px solid #c6c8cc; }
.status-left .pressed { border-color: #999; background: #e2e4e7; }
.message { display: flex; align-items: center; gap: 2px; height: 16px; margin: 7px 0 0 2px; font-size: 11px; white-space: nowrap; }
.status-right { display: flex; align-items: flex-end; margin-left: auto; padding-bottom: 3px; }
.cell { display: flex; align-items: center; height: 24px; border-left: 1px solid #d0d2d6; }
.blank { width: 36px; }
.lights { width: 32px; gap: 2px; padding-left: 4px; }
.lamp { width: 6px; height: 6px; border-radius: 50%; background: #ccced1; }
.lamp.on { width: 10px; height: 10px; background: #45d245; }
.find { width: 46px; padding-left: 3px; }
.find button { display: flex; align-items: center; justify-content: center; width: 40px; height: 22px; border: 1px solid #b8bbc0; border-radius: 3px; background: linear-gradient(#fff, #e8e9ec); }
.filter { position: relative; width: 276px; justify-content: flex-end; margin-right: 6px; }
.filter select { appearance: none; width: 178px; height: 20px; padding: 0 5px; border: 1px solid #b8bbc0; border-radius: 0; background: linear-gradient(#fff, #eee); color: #111; font: inherit; }
.filter .arrow { position: absolute; right: 3px; border-width: 6px 4px 0; }
.watermark { position: absolute; right: 4px; bottom: -5px; z-index: 2; display: flex; width: 207px; height: 63px; background: rgba(250, 250, 245, .38); opacity: .9; pointer-events: none; }
.rings { width: 60px; height: 62px; }
.mark-text { display: flex; flex-direction: column; }
.mark-text strong { padding-left: 10px; font-size: 29px; line-height: 40px; color: #8bcdab; }
.mark-text span { font: 16px/20px "Liberation Sans", sans-serif; color: #b5dcd8; }
.taskbar { display: flex; height: 9px; padding-left: 42px; gap: 5px; border-top: 1px solid #555b64; background: linear-gradient(90deg, #343d52, #2d3549 20%, #424c63 35%, #2a3246 60%, #35405a 75%, #293145); }
.task { width: 42px; margin-top: 1px; border: 1px solid #7f8794; border-bottom: 0; background: #4a5366; }
.task.first { background: #343c4c; }
.task.third { margin-left: 228px; background: #343c4c; }
.task.bright { border-color: #ddd; background: #858f9d; }
```
